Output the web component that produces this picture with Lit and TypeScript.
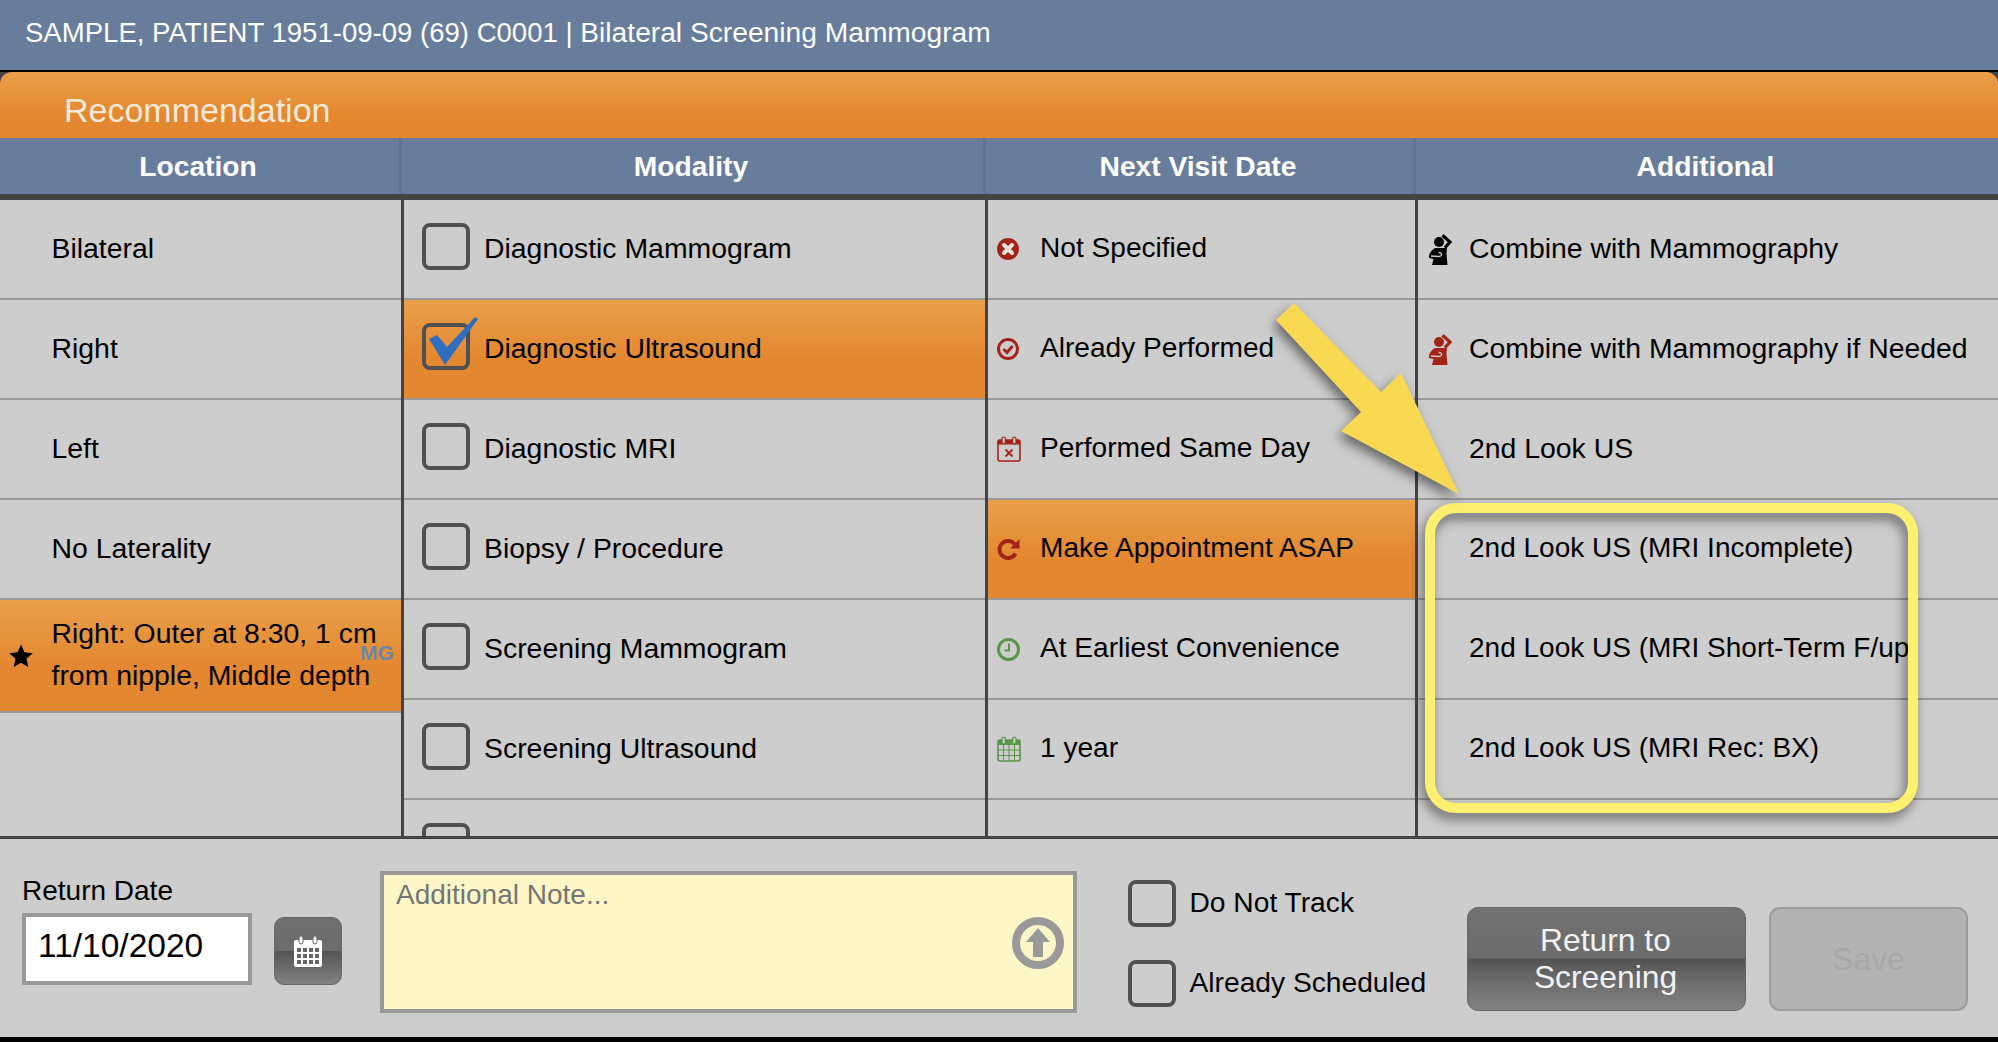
import { LitElement, html, css, svg } from "lit";
import { customElement } from "lit/decorators.js";

const RED = "#a32417";
const GREEN = "#5b9748";

const icons: Record<string, any> = {
  xcircle: html`<svg width="22" height="22" viewBox="0 0 22 22"><circle cx="11" cy="11" r="11" fill="${RED}"/><path d="M7 7 L15 15 M15 7 L7 15" stroke="#e8e4e0" stroke-width="4" stroke-linecap="round"/></svg>`,
  check: html`<svg width="22" height="22" viewBox="0 0 22 22"><circle cx="11" cy="11" r="9.5" fill="none" stroke="${RED}" stroke-width="3"/><path d="M6.5 11 L10 14.5 L15.5 8" fill="none" stroke="${RED}" stroke-width="3"/></svg>`,
  calx: html`<svg width="24" height="26" viewBox="0 0 24 26"><rect x="1" y="4" width="22" height="21" rx="1.5" fill="none" stroke="${RED}" stroke-width="1.6"/><rect x="1" y="4" width="22" height="4.5" fill="${RED}"/><rect x="5" y="1" width="3.4" height="7" rx="1.7" fill="#cdcdcd" stroke="${RED}" stroke-width="1.2"/><rect x="15.6" y="1" width="3.4" height="7" rx="1.7" fill="#cdcdcd" stroke="${RED}" stroke-width="1.2"/><path d="M8.5 13.5 L15.5 20.5 M15.5 13.5 L8.5 20.5" stroke="${RED}" stroke-width="1.8"/></svg>`,
  redo: html`<svg width="23" height="22" viewBox="0 0 23 22"><path d="M18.5 15.5 A8.5 8.5 0 1 1 17.5 6" fill="none" stroke="${RED}" stroke-width="4"/><path d="M22.5 1 V10.5 H13 Z" fill="${RED}"/></svg>`,
  clock: html`<svg width="23" height="23" viewBox="0 0 23 23"><circle cx="11.5" cy="11.5" r="10" fill="none" stroke="${GREEN}" stroke-width="3"/><path d="M12 5.5 V12.5 H7.5" fill="none" stroke="${GREEN}" stroke-width="2"/></svg>`,
  cal: html`<svg width="24" height="26" viewBox="0 0 24 26"><rect x="1" y="4" width="22" height="21" rx="1.5" fill="none" stroke="${GREEN}" stroke-width="1.6"/><rect x="1" y="4" width="22" height="5" fill="${GREEN}"/><rect x="5" y="1" width="3.4" height="7" rx="1.7" fill="#cdcdcd" stroke="${GREEN}" stroke-width="1.2"/><rect x="15.6" y="1" width="3.4" height="7" rx="1.7" fill="#cdcdcd" stroke="${GREEN}" stroke-width="1.2"/><path d="M1 14 H23 M1 19.5 H23 M6.5 9 V25 M12 9 V25 M17.5 9 V25" stroke="${GREEN}" stroke-width="1"/></svg>`,
};

const person = (c: string) => html`<svg width="24" height="31" viewBox="0 0 24 31"><circle cx="11" cy="8" r="5" fill="${c}"/><path d="M14.5 1.2 L22 8 L17 13.5" fill="none" stroke="${c}" stroke-width="3.2"/><path d="M7 14 H16 L19 12.5 L18.5 20 L19.5 31 H4 L5.5 25 L1 24 C0.5 20 3.5 16 7 14 Z" fill="${c}"/><path d="M3 22 L11 22.5 C14.5 22.5 14.5 18.5 10.5 18.5" fill="none" stroke="#cdcdcd" stroke-width="1.3"/></svg>`;

const locations = ["Bilateral", "Right", "Left", "No Laterality"];
const modalities = [
  "Diagnostic Mammogram",
  "Diagnostic Ultrasound",
  "Diagnostic MRI",
  "Biopsy / Procedure",
  "Screening Mammogram",
  "Screening Ultrasound",
  "",
];
const visits = [
  ["xcircle", "Not Specified"],
  ["check", "Already Performed"],
  ["calx", "Performed Same Day"],
  ["redo", "Make Appointment ASAP"],
  ["clock", "At Earliest Convenience"],
  ["cal", "1 year"],
];
const additional = [
  "Combine with Mammography",
  "Combine with Mammography if Needed",
  "2nd Look US",
  "2nd Look US (MRI Incomplete)",
  "2nd Look US (MRI Short-Term F/up)",
  "2nd Look US (MRI Rec: BX)",
];

@customElement("app-root")
export class AppRoot extends LitElement {
  static styles = css`
    :host {
      display: block;
      width: 1998px;
      height: 1042px;
      position: relative;
      overflow: hidden;
      background: #000;
      font-family: "Liberation Sans", Arial, sans-serif;
      font-size: 28px;
      color: #000;
    }
    .top {
      height: 70px;
      background: #677d9b;
      color: #fff;
      padding-left: 25px;
      font-size: 27.55px;
      line-height: 65px;
      box-sizing: border-box;
      white-space: nowrap;
    }
    .top .exam {
      font-size: 28.2px;
    }
    .panel {
      margin-top: 2px;
      background: #444;
      height: 965px;
      overflow: hidden;
      display: flex;
      flex-direction: column;
    }
    .title {
      height: 66px;
      box-sizing: border-box;
      padding-left: 64px;
      padding-top: 17px;
      font-size: 34px;
      line-height: 42px;
      color: #f6ead9;
      border-radius: 12px 12px 0 0;
      background: linear-gradient(#ec9f49, #e38730 68%);
    }
    .heads {
      display: grid;
      grid-template-columns: 402px 584px 430px 1fr;
      height: 62px;
      box-sizing: border-box;
      background: #677d9b;
      border-bottom: 6px solid #444;
    }
    .heads div {
      color: #fff;
      font-weight: 700;
      font-size: 28.2px;
      text-align: center;
      line-height: 56px;
      border-right: 3px solid #5b7597;
      padding-right: 3px;
    }
    .heads div:last-child {
      border-right: 0;
    }
    .body {
      display: grid;
      grid-template-columns: 404px 584px 430px 1fr;
      height: 636px;
      overflow: hidden;
      background: #cdcdcd;
      border-bottom: 3px solid #444;
      font-size: 28.4px;
    }
    .col {
      border-right: 3.5px solid #444;
      height: 636px;
      overflow: hidden;
    }
    .col:last-child {
      border-right: 0;
    }
    .row {
      height: 100px;
      box-sizing: border-box;
      border-bottom: 2px solid #999;
      display: flex;
      align-items: center;
      white-space: nowrap;
    }
    .on {
      background: linear-gradient(#ea9f4a, #e38730 62%);
    }
    .loc {
      padding-left: 51.5px;
    }
    .mid {
      height: 113px;
      padding-left: 9px;
      position: relative;
      line-height: 41.5px;
    }
    .mid .star {
      width: 42.5px;
      display: flex;
    }
    .mg {
      position: absolute;
      left: 360px;
      top: 41px;
      font-size: 21px;
      line-height: 24px;
      font-weight: 700;
      color: #6a86aa;
    }
    .mod {
      padding-left: 18px;
      gap: 14px;
    }
    .box {
      width: 48px;
      height: 47px;
      box-sizing: border-box;
      border: 4px solid #505050;
      border-radius: 8px;
      filter: blur(0.7px);
      flex: none;
      margin-top: -6px;
    }
    .boxwrap {
      position: relative;
      display: flex;
      flex: none;
    }
    .tick {
      position: absolute;
      left: 0;
      top: -6px;
      overflow: visible;
      filter: blur(0.4px);
    }
    .txt {
      margin-top: -1.5px;
    }
    .vis {
      padding-left: 9px;
      font-size: 28.1px;
    }
    .slot {
      width: 43px;
      flex: none;
      display: flex;
      align-items: center;
    }
    .add {
      padding-left: 10px;
    }
    .add .slot {
      width: 41px;
    }
    .add.look {
      font-size: 28px;
    }
    .foot {
      flex: 1;
      display: flex;
      align-items: flex-start;
      padding-left: 22px;
      background: #cdcdcd;
    }
    .date label {
      display: block;
      margin-top: 36px;
      line-height: 32px;
    }
    .field {
      margin-top: 6px;
      width: 230px;
      height: 72px;
      box-sizing: border-box;
      border: 4px solid #999;
      background: #fff;
      font-size: 33.5px;
      line-height: 58px;
      padding-left: 12px;
    }
    .calbtn {
      margin: 78px 0 0 22px;
      width: 68px;
      height: 68px;
      box-sizing: border-box;
      border: 1px solid #666;
      border-radius: 10px;
      background: linear-gradient(#707070, #6b6b6b 50%, #555 50%, #828282);
      display: flex;
      align-items: center;
      justify-content: center;
    }
    .note {
      position: relative;
      margin: 32px 0 0 38px;
      width: 697px;
      height: 142px;
      box-sizing: border-box;
      border: 4px solid #999;
      background: #fdf7c8;
      color: #757575;
      padding-left: 12px;
      line-height: 39px;
    }
    .note svg {
      position: absolute;
      right: 9px;
      top: 42px;
    }
    .checks {
      margin: 40px 0 0 51px;
      width: 339px;
      display: flex;
      flex-direction: column;
      gap: 32px;
      font-size: 28.2px;
    }
    .checks .it {
      display: flex;
      align-items: center;
      gap: 13.5px;
      height: 48px;
    }
    .checks .box {
      margin: 0;
    }
    .btn {
      margin-top: 68px;
      height: 104px;
      box-sizing: border-box;
      border-radius: 11px;
      font-size: 31.8px;
      line-height: 37px;
      text-align: center;
      display: flex;
      align-items: center;
      justify-content: center;
    }
    .ret {
      width: 279px;
      color: #f2f2f2;
      border: 1px solid #666;
      padding-right: 2px;
      background: linear-gradient(#727272, #6c6c6c 49%, #535353 50%, #6a6a6a 70%, #828282);
    }
    .save {
      margin-left: 23px;
      width: 199px;
      color: #a8a8a8;
      border: 2px solid #9d9d9d;
      background: #b3b3b3;
    }
    .overlay {
      position: absolute;
      left: 0;
      top: 0;
      pointer-events: none;
    }
    .shadow {
      filter: drop-shadow(-3px 6px 6px rgba(0, 0, 0, 0.5));
    }
  `;

  render() {
    return html`
      <div class="top">SAMPLE, PATIENT 1951-09-09 (69) C0001 | <span class="exam">Bilateral Screening Mammogram</span></div>
      <div class="panel">
        <div class="title">Recommendation</div>
        <div class="heads">
          <div>Location</div>
          <div>Modality</div>
          <div>Next Visit Date</div>
          <div>Additional</div>
        </div>
        <div class="body">
          <div class="col">
            ${locations.map((l) => html`<div class="row loc"><span class="txt">${l}</span></div>`)}
            <div class="row on mid">
              <span class="star">
                <svg width="24" height="24" viewBox="0 0 24 24"><path d="M12 0.5 L15.4 8.3 L23.8 9.2 L17.5 14.8 L19.3 23 L12 18.8 L4.7 23 L6.5 14.8 L0.2 9.2 L8.6 8.3 Z" fill="#000"/></svg>
              </span>
              <span class="txt">Right: Outer at 8:30, 1 cm<br />from nipple, Middle depth</span>
              <span class="mg">MG</span>
            </div>
          </div>
          <div class="col">
            ${modalities.map(
              (m, i) => html`<div class="row mod ${i === 1 ? "on" : ""}">
                <span class="boxwrap">
                  <span class="box"></span>
                  ${i === 1
                    ? html`<svg class="tick" width="48" height="47" viewBox="0 0 48 47"><path d="M7 16 L15 12 L25 24 L53 -6 L56 -4 L23 42 Z" fill="#2f6dc1"/></svg>`
                    : ""}
                </span>
                <span class="txt">${m}</span>
              </div>`
            )}
          </div>
          <div class="col">
            ${visits.map(
              ([ic, t], i) => html`<div class="row vis ${i === 3 ? "on" : ""}">
                <span class="slot">${icons[ic]}</span><span class="txt">${t}</span>
              </div>`
            )}
            <div class="row"></div>
          </div>
          <div class="col">
            ${additional.map(
              (t, i) => html`<div class="row add ${i > 2 ? "look" : ""}">
                <span class="slot">${i === 0 ? person("#000") : i === 1 ? person(RED) : ""}</span>
                <span class="txt">${t}</span>
              </div>`
            )}
            <div class="row"></div>
          </div>
        </div>
        <div class="foot">
          <div class="date">
            <label>Return Date</label>
            <div class="field">11/10/2020</div>
          </div>
          <div class="calbtn">
            <svg width="28" height="31" viewBox="0 0 28 31">
              <rect x="0" y="4" width="28" height="27" rx="2" fill="#fff" />
              <rect x="5" y="0" width="4" height="8" rx="2" fill="#fff" stroke="#666" stroke-width="1" />
              <rect x="19" y="0" width="4" height="8" rx="2" fill="#fff" stroke="#666" stroke-width="1" />
              ${[12, 18, 24].map((y) =>
                [3, 9, 15, 21].map((x) => svg`<rect x="${x}" y="${y}" width="4" height="4" fill="#666" />`)
              )}
            </svg>
          </div>
          <div class="note">
            Additional Note...
            <svg width="52" height="52" viewBox="0 0 52 52">
              <circle cx="26" cy="26" r="22" fill="none" stroke="#999" stroke-width="8" />
              <path d="M26 11 L38 25 H31 V40 H21 V25 H14 Z" fill="#999" />
            </svg>
          </div>
          <div class="checks">
            <div class="it"><span class="box"></span><span class="txt">Do Not Track</span></div>
            <div class="it"><span class="box"></span><span class="txt">Already Scheduled</span></div>
          </div>
          <div class="btn ret">Return to<br />Screening</div>
          <div class="btn save">Save</div>
        </div>
      </div>
      <svg class="overlay" width="1998" height="1042" viewBox="0 0 1998 1042">
        <g class="shadow">
          <rect x="1430" y="508" width="483" height="300" rx="26" fill="none" stroke="#fef06f" stroke-width="10" />
        </g>
        <g class="shadow">
          <path d="M1294 303 L1276 320 L1361 412 L1341 431 L1459 494 L1401 373 L1381 392 Z" fill="#f9d952" />
        </g>
      </svg>
    `;
  }
}
